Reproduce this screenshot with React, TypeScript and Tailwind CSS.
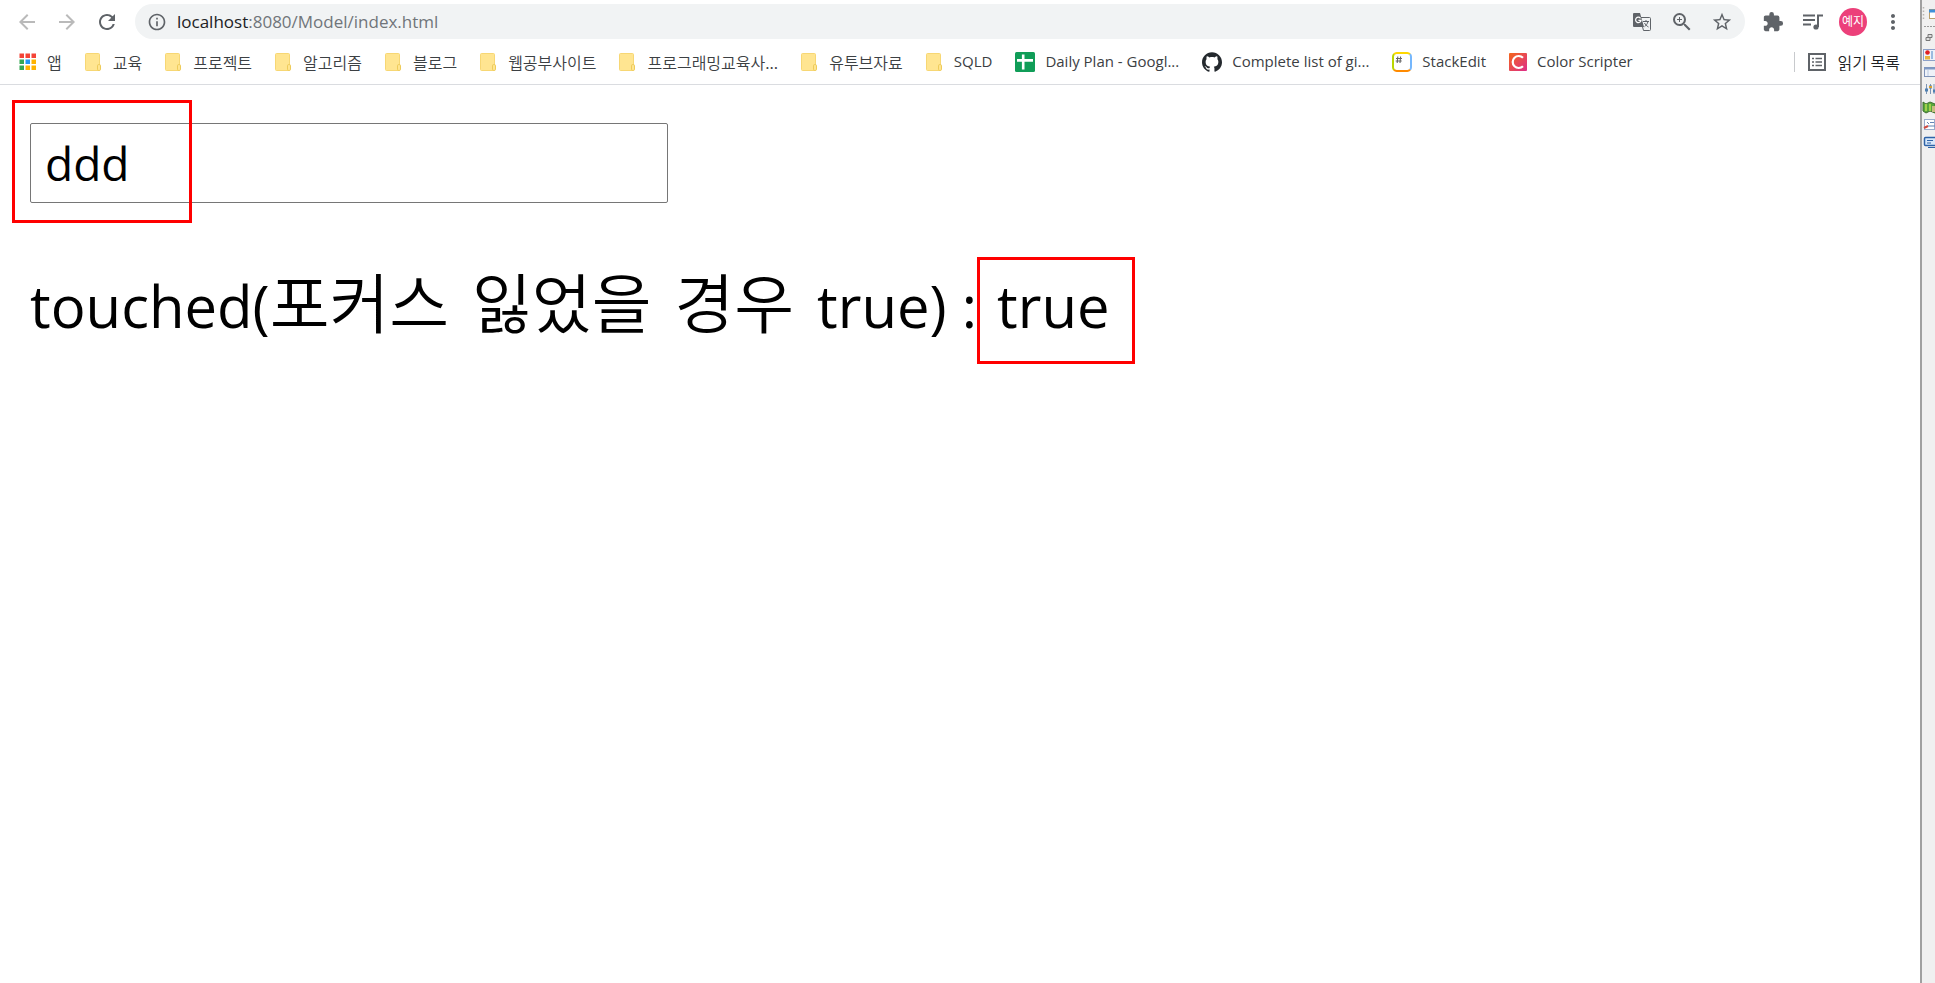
import { useState } from 'react'
import type { ReactNode } from 'react'
import {
  MdArrowBack,
  MdArrowForward,
  MdExtension,
  MdInfoOutline,
  MdMoreVert,
  MdRefresh,
  MdStarBorder,
  MdZoomIn,
} from 'react-icons/md'
import { SiGithub } from 'react-icons/si'

const uiFont = "font-['Open_Sans','Noto_Sans_CJK_KR',sans-serif]"
const hangulFont = "font-['Noto_Sans_CJK_KR',sans-serif] font-[350]"
const iconButton = 'flex w-10 items-center justify-center'

interface BookmarkItem {
  icon: ReactNode
  label: string
  korean?: boolean
}

function AppsIcon() {
  const colors = ['#f44336', '#f44336', '#f44336', '#34a853', '#2196f3', '#ffb300', '#34a853', '#ffb300', '#ffb300']
  return (
    <svg viewBox="0 0 18 18" className="size-[18px] shrink-0">
      {colors.map((color, i) => (
        <rect key={i} x={(i % 3) * 6 + 0.5} y={Math.floor(i / 3) * 6 + 0.5} width="4.5" height="4.5" fill={color} />
      ))}
    </svg>
  )
}

function FolderIcon() {
  return (
    <svg viewBox="0 0 18 18" className="size-[18px] shrink-0">
      <rect x="0.5" y="0.5" width="14" height="17" rx="1" fill="#ffe591" stroke="#f7d774" />
      <rect x="12.5" y="11.5" width="3" height="6" rx="1.3" fill="#ffe591" stroke="#eecb5a" />
    </svg>
  )
}

function SheetsIcon() {
  return (
    <svg viewBox="0 0 20 20" className="size-5 shrink-0">
      <rect width="20" height="20" rx="1.5" fill="#109d58" />
      <path d="M8.2 2.5v15M2 8.4h16" stroke="#fff" strokeWidth="2.6" />
    </svg>
  )
}

function StackEditIcon() {
  return (
    <svg viewBox="0 0 20 20" className="size-5 shrink-0" fill="none" strokeWidth="2">
      <path d="M2 2.2A4 4 0 0 1 5 1h10a4 4 0 0 1 3 1.2" stroke="#ffd700" />
      <path d="M18 2.2A4 4 0 0 1 19 5v10a4 4 0 0 1-1 2.8" stroke="#75b7fd" />
      <path d="M18 17.8A4 4 0 0 1 15 19H5a4 4 0 0 1-3-1.2" stroke="#ff8a00" />
      <path d="M2 17.8A4 4 0 0 1 1 15V5a4 4 0 0 1 1-2.8" stroke="#bad600" />
      <path d="M5.8 4.5l-.6 6.5M8.6 4.5l-.6 6.5M4 6.5h6M3.7 9h6" stroke="#666" strokeWidth="1.1" />
    </svg>
  )
}

function ColorScripterIcon() {
  return (
    <svg viewBox="0 0 18 18" className="size-[18px] shrink-0">
      <defs>
        <linearGradient id="scripter" x1="0" y1="0" x2="1" y2="1">
          <stop offset="0" stopColor="#f4661b" />
          <stop offset="1" stopColor="#dd2d8a" />
        </linearGradient>
      </defs>
      <rect width="18" height="18" rx="1" fill="url(#scripter)" />
      <path d="M14 4.800A6 6 0 1 0 14 13.200" fill="none" stroke="#fff" strokeWidth="2.200" />
    </svg>
  )
}

function TranslateIcon() {
  return (
    <svg viewBox="0 0 18 18" className="size-[18px]">
      <path d="M7 4.5h9.5a1 1 0 0 1 1 1v11a1 1 0 0 1-1 1h-6z" fill="none" stroke="#5f6368" />
      <path d="M1 0h6l4 14H1a1 1 0 0 1-1-1V1a1 1 0 0 1 1-1z" fill="#5f6368" />
      <path d="M7.5 5.3A2.7 2.7 0 1 0 8 7.4H5.4" fill="none" stroke="#fff" strokeWidth="1.2" />
      <path d="M10 8.5h6M13 7v1.5M15 8.5c-.6 2.5-2 4-3.5 5.2M11.5 10c.8 1.6 2.2 3 4 4" fill="none" stroke="#5f6368" />
    </svg>
  )
}

function MediaIcon() {
  return (
    <svg viewBox="0 0 20 16" className="h-4 w-5" fill="none" stroke="#5f6368" strokeWidth="2">
      <path d="M0 1.5h12M0 6h12M0 10.5h8M15 13V1.500h5" />
      <circle cx="13" cy="13" r="2.6" fill="#5f6368" stroke="none" />
    </svg>
  )
}

function ReadingListIcon() {
  return (
    <svg viewBox="0 0 18 18" className="size-[18px] shrink-0" fill="none" stroke="#5f6368" strokeWidth="2">
      <rect x="1" y="1" width="16" height="16" />
      <path d="M4 5.5h2M4 9h2M4 12.5h2M7.5 5.5H14M7.5 9H14M7.5 12.5H14" strokeWidth="1.5" />
    </svg>
  )
}

const bookmarks: BookmarkItem[] = [
  { icon: <AppsIcon />, label: '앱', korean: true },
  { icon: <FolderIcon />, label: '교육', korean: true },
  { icon: <FolderIcon />, label: '프로젝트', korean: true },
  { icon: <FolderIcon />, label: '알고리즘', korean: true },
  { icon: <FolderIcon />, label: '블로그', korean: true },
  { icon: <FolderIcon />, label: '웹공부사이트', korean: true },
  { icon: <FolderIcon />, label: '프로그래밍교육사...', korean: true },
  { icon: <FolderIcon />, label: '유투브자료', korean: true },
  { icon: <FolderIcon />, label: 'SQLD' },
  { icon: <SheetsIcon />, label: 'Daily Plan - Googl...' },
  { icon: <SiGithub className="size-5 shrink-0 text-[#24292e]" />, label: 'Complete list of gi...' },
  { icon: <StackEditIcon />, label: 'StackEdit' },
  { icon: <ColorScripterIcon />, label: 'Color Scripter' },
]

function Toolbar() {
  return (
    <div className="flex h-[43px] items-center px-[7px] text-[#5f6368]">
      <div className="flex items-center">
        <button aria-label="Back" className={`${iconButton} text-[#bababa]`}><MdArrowBack className="size-6" /></button>
        <button aria-label="Forward" className={`${iconButton} text-[#bababa]`}><MdArrowForward className="size-6" /></button>
        <button aria-label="Reload" className={iconButton}><MdRefresh className="size-6" /></button>
      </div>
      <div className="ml-2 flex h-[35px] flex-1 items-center rounded-full bg-[#f1f3f4] pr-[3px] pl-3">
        <MdInfoOutline className="size-5 shrink-0" />
        <div className="ml-[10px] flex-1 text-[17px] text-[#70757a]">
          <span className="text-[#202124]">localhost</span>:8080/Model/index.html
        </div>
        <div className="flex items-center">
          <button aria-label="Translate" className={iconButton}><TranslateIcon /></button>
          <button aria-label="Zoom" className={iconButton}><MdZoomIn className="size-6" /></button>
          <button aria-label="Bookmark" className={iconButton}><MdStarBorder className="size-[22px]" /></button>
        </div>
      </div>
      <div className="ml-2 flex items-center">
        <button aria-label="Extensions" className={iconButton}><MdExtension className="size-[22px]" /></button>
        <button aria-label="Media" className={iconButton}><MediaIcon /></button>
        <button className={iconButton}>
          <span className="flex size-7 items-center justify-center rounded-full bg-[#ec407a] text-[12px] text-white">예지</span>
        </button>
        <button aria-label="Menu" className={iconButton}><MdMoreVert className="size-6" /></button>
      </div>
    </div>
  )
}

function BookmarksBar() {
  return (
    <nav className="flex h-[42px] items-center border-b border-[#dadce0] pr-5 pb-1 pl-[19px] text-[#3c4043]">
      <div className="flex flex-1 items-center gap-[23px]">
        {bookmarks.map((item) => (
          <a key={item.label} href="#" className="flex items-center gap-[10px] whitespace-nowrap">
            {item.icon}
            <span className={item.korean ? `${hangulFont} text-[16px] leading-5` : 'text-[15px]'}>{item.label}</span>
          </a>
        ))}
      </div>
      <a href="#" className={`${hangulFont} flex items-center gap-3 border-l border-[#c8cacd] pl-[13px] text-[16px] leading-5 text-[#202124]`}>
        <ReadingListIcon />
        읽기 목록
      </a>
    </nav>
  )
}

// icons of the editor window that shows behind the browser
function SideStrip() {
  return (
    <aside className="w-[15px] shrink-0 overflow-hidden border-l-2 border-[#a0a0a0] bg-[#f0f0f0]">
      <svg viewBox="0 0 13 160" className="h-40 w-[13px]" fill="none">
        <path d="M1.5 7v12" stroke="#b8b4b0" strokeWidth="1.5" strokeDasharray="1.5 2" />
        <path d="M2 26.5h11" stroke="#9a9a9a" strokeDasharray="2 1" />
        <rect x="7.5" y="9.5" width="9" height="9" fill="#fff" stroke="#b9a06c" />
        <path d="M7 11h6" stroke="#3f8fd8" strokeWidth="3" />
        <path d="M6 34.5h4v3H6zM4 37.5h4v3H4z" fill="#ddd" stroke="#777" />
        <rect x="1.5" y="49.5" width="12" height="11" fill="#eef2fa" stroke="#8ca0c8" />
        <circle cx="5.5" cy="52.5" r="2.3" fill="#e02020" />
        <rect x="3" y="56" width="5" height="3.5" fill="#e8b440" />
        <path d="M10 51v8" stroke="#9bbbe0" strokeWidth="2" />
        <rect x="2.5" y="67.5" width="12" height="9" fill="#eef2f8" stroke="#7f93b8" />
        <path d="M2 68.5h11" stroke="#7f99c4" strokeWidth="2" />
        <path d="M6 70v6" stroke="#b8c8e0" />
        <path d="M4.5 84v10M8.5 84v10M12 84v10" stroke="#7d96b5" />
        <path d="M3 90h3M7 87h3M11 91h3" stroke="#4f7fb0" strokeWidth="3" />
        <path d="M7 87h3" stroke="#d8a030" strokeWidth="2" />
        <path d="M1 102l3 2 4-2 5 2v9l-5-2-4 2-3-2z" fill="#58a63c" stroke="#416f30" />
        <path d="M4 104v7M8 104v7" stroke="#b8df50" strokeWidth="1.5" />
        <path d="M10 106h3v6h-3z" fill="#c8bc80" />
        <rect x="2.5" y="119.5" width="10" height="10" fill="#fff" stroke="#9aaccc" />
        <path d="M5 122l2 2M8 122.5h4M6 126h7" stroke="#6585b5" />
        <path d="M2 128l4-2" stroke="#d04a40" strokeWidth="2" />
        <rect x="2.5" y="137.5" width="12" height="8" rx="1" fill="#d8e8fa" stroke="#2f63a8" strokeWidth="1.5" />
        <path d="M5 140.5h6M5 143h4M6 147.5h7" stroke="#2f63a8" />
      </svg>
    </aside>
  )
}

export default function App() {
  const [value, setValue] = useState('ddd')

  return (
    <div className={`flex min-h-screen bg-white ${uiFont}`}>
      <div className="min-w-0 flex-1">
        <Toolbar />
        <BookmarksBar />
        <main className="px-3 pt-[15px] text-black">
          <div className="relative px-[18px] py-[23px]">
            <input
              aria-label="model"
              value={value}
              onChange={(e) => setValue(e.target.value)}
              className="block h-20 w-[638px] rounded-[2px] border border-[#767676] px-[14px] text-[46px] outline-none"
            />
            <div className="pointer-events-none absolute top-0 left-0 h-[123px] w-[180px] border-3 border-[#f00]" />
          </div>
          <p className="mt-[31px] flex items-baseline gap-[23px] pl-[18px] text-[58px] leading-none whitespace-nowrap">
            <span>touched(<span className={`${hangulFont} text-[65px]`}>포커스</span> </span>
            <span className={`${hangulFont} text-[65px]`}>잃었을 </span>
            <span className={`${hangulFont} text-[65px]`}>경우 </span>
            <span className="flex items-baseline">
              true) :
              <span className="h-[107px] w-[158px] border-3 border-[#f00] pl-[17px] leading-[91px]">true</span>
            </span>
          </p>
        </main>
      </div>
      <SideStrip />
    </div>
  )
}
